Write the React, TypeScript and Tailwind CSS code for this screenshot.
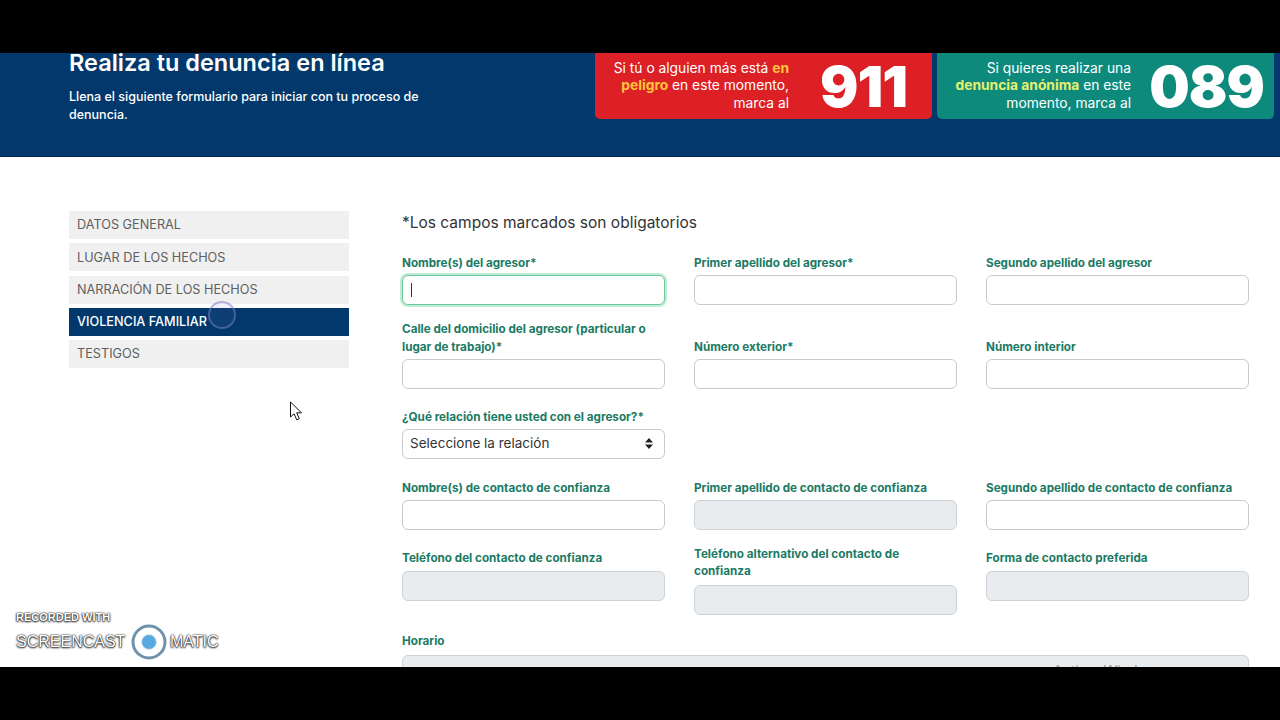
const SIDEBAR = ["DATOS GENERAL", "LUGAR DE LOS HECHOS", "NARRACIÓN DE LOS HECHOS", "VIOLENCIA FAMILIAR", "TESTIGOS"];

function Field({ label, disabled, focused, className = "", gap = "mb-[3px]" }: { label: React.ReactNode; disabled?: boolean; focused?: boolean; className?: string; gap?: string }) {
  return (
    <div className={className}>
      <label className={`block text-[11.7px] leading-[17.5px] font-bold text-[#1a7a64] ${gap}`}>{label}</label>
      {focused ? (
        <div className="h-[30px] rounded-[6px] border border-[#6cc79c] ring-2 ring-[#c0ecd5] bg-white flex items-center pl-[8px]">
          <div className="w-px h-[14px] bg-[#333]" />
        </div>
      ) : (
        <div className={`h-[30px] rounded-[6px] border ${disabled ? "bg-[#e9ecef] border-[#ced2d6]" : "bg-white border-[#c8cbce]"}`} />
      )}
    </div>
  );
}

function CallCard({ color, number, numberPad, children }: { color: string; number: string; numberPad: string; children: React.ReactNode }) {
  return (
    <div className={`h-[66px] w-[337px] rounded-b-[5px] flex items-center justify-end ${color}`}>
      <p className="text-right text-white text-[13.8px] leading-[17.5px] font-normal whitespace-nowrap">{children}</p>
      <div className={`text-white text-[57px] leading-none font-black w-[143px] shrink-0 text-right tracking-[-1px] ${numberPad}`}>{number}</div>
    </div>
  );
}

export default function App() {
  return (
    <div className="w-[1280px] h-[720px] flex flex-col overflow-hidden bg-white relative font-['Inter','Liberation_Sans',sans-serif]">
      <div className="h-[53px] bg-black shrink-0" />

      <div className="flex-1 overflow-hidden">
        {/* Banner */}
        <div className="h-[104px] bg-[#02386b] border-b border-[#022a52] flex">
          <div className="pl-[69px] w-[595px] shrink-0">
            <h1 className="text-white text-[23.5px] leading-[19px] font-semibold">Realiza tu denuncia en línea</h1>
            <p className="text-white text-[12.5px] leading-[18px] font-medium mt-[15.5px] w-[370px]">
              Llena el siguiente formulario para iniciar con tu proceso de denuncia.
            </p>
          </div>
          <div className="flex gap-[5px]">
            <CallCard color="bg-[#dd2025]" number="911" numberPad="pr-[25px]">
              Si tú o alguien más está <b className="text-[#ffc43a]">en</b>
              <br />
              <b className="text-[#ffc43a]">peligro</b> en este momento,
              <br />
              marca al
            </CallCard>
            <CallCard color="bg-[#0e8a7d]" number="089" numberPad="pr-[10px]">
              Si quieres realizar una
              <br />
              <b className="text-[#e6f06c]">denuncia anónima</b> en este
              <br />
              momento, marca al
            </CallCard>
          </div>
        </div>

        <div className="flex pt-[54px]">
          <aside className="ml-[69px] w-[280px] shrink-0 flex flex-col gap-[4.25px]">
            {SIDEBAR.map((item) => (
              <div
                key={item}
                className={`h-[28px] pl-[8px] flex items-center text-[12.7px] ${
                  item === "VIOLENCIA FAMILIAR" ? "bg-[#02386b] text-white font-medium" : "bg-[#f0f0f0] text-[#5f5f5f]"
                }`}
              >
                {item}
              </div>
            ))}
          </aside>

          <main className="ml-[53px] w-[847px]">
            <h2 className="text-[15.5px] leading-[22px] text-[#333] pt-[1px] mb-[20.5px]">*Los campos marcados son obligatorios</h2>

            <div className="grid grid-cols-[263px_263px_263px] gap-x-[29px] items-end">
              <Field label="Nombre(s) del agresor*" focused />
              <Field label="Primer apellido del agresor*" />
              <Field label="Segundo apellido del agresor" />
            </div>

            <div className="grid grid-cols-[263px_263px_263px] gap-x-[29px] items-end mt-[16px]">
              <Field label="Calle del domicilio del agresor (particular o lugar de trabajo)*" />
              <Field label="Número exterior*" />
              <Field label="Número interior" />
            </div>

            <div className="mt-[20px] w-[263px]">
              <label className="block text-[11.7px] leading-[17.5px] font-bold text-[#1a7a64] mb-[2px]">¿Qué relación tiene usted con el agresor?*</label>
              <div className="h-[30px] rounded-[6px] border border-[#c8cbce] bg-white flex items-center justify-between pl-[7px] pr-[11px] text-[13.5px] text-[#333]">
                <span>Seleccione la relación</span>
                <svg width="8" height="11" viewBox="0 0 8 11"><path d="M4 0 8 4.4H0zM4 11 0 6.6h8z" fill="#222" /></svg>
              </div>
            </div>

            <div className="grid grid-cols-[263px_263px_263px] gap-x-[29px] items-end mt-[21px]">
              <Field label="Nombre(s) de contacto de confianza" />
              <Field label="Primer apellido de contacto de confianza" disabled />
              <Field label="Segundo apellido de contacto de confianza" />
            </div>

            <div className="grid grid-cols-[263px_263px_263px] gap-x-[29px] items-start mt-[15.5px]">
              <Field label="Teléfono del contacto de confianza" disabled className="pt-[4px]" gap="mb-[4px]" />
              <Field label={<>Teléfono alternativo del contacto de<br />confianza</>} disabled gap="mb-[4px]" />
              <Field label="Forma de contacto preferida" disabled className="pt-[4px]" gap="mb-[4px]" />
            </div>

            <div className="mt-[18.5px]">
              <label className="block text-[11.7px] leading-[17.5px] font-bold text-[#1a7a64] mb-[4px]">Horario</label>
              <div className="h-[30px] rounded-[6px] border border-[#ced2d6] bg-[#e9ecef] relative">
                <span className="absolute left-[650px] top-[4px] text-[14px] text-[#9a9da0]">Activar Windows</span>
              </div>
            </div>
          </main>
        </div>
      </div>

      <div className="h-[53px] bg-black shrink-0" />

      {/* click ripple */}
      <div className="absolute left-[208px] top-[301px] w-[28px] h-[28px] rounded-full border-2 border-[#7a7fd0]/50 bg-[#7a7fd0]/10" />

      {/* cursor */}
      <svg className="absolute left-[289px] top-[401px]" width="14" height="20" viewBox="0 0 14 20">
        <path d="M1.5 1v15l3.6-3.2 2.6 6 2.6-1.1-2.6-5.9h4.8z" fill="#fff" stroke="#111" strokeWidth="1" strokeLinejoin="round" />
      </svg>

      {/* Screencast-O-Matic watermark */}
      <div className="absolute left-[16px] top-[610px] text-white font-['Liberation_Sans',sans-serif] [text-shadow:0_0_1px_#111,0_0_2px_#222,0_1px_2px_#222]">
        <div className="text-[11px] leading-[15px] font-semibold">RECORDED WITH</div>
        <div className="flex items-center mt-[-1px]">
          <span className="text-[16px] leading-[30px] w-[115px]">SCREENCAST</span>
          <svg width="36" height="36" viewBox="0 0 36 36">
            <circle cx="18" cy="18" r="16" fill="#fff" stroke="#6f93aa" strokeWidth="3" />
            <circle cx="18" cy="18" r="7.5" fill="#58a9e0" stroke="#dfeaf2" strokeWidth="1" />
          </svg>
          <span className="text-[16px] leading-[30px] ml-[3px]">MATIC</span>
        </div>
      </div>
    </div>
  );
}
